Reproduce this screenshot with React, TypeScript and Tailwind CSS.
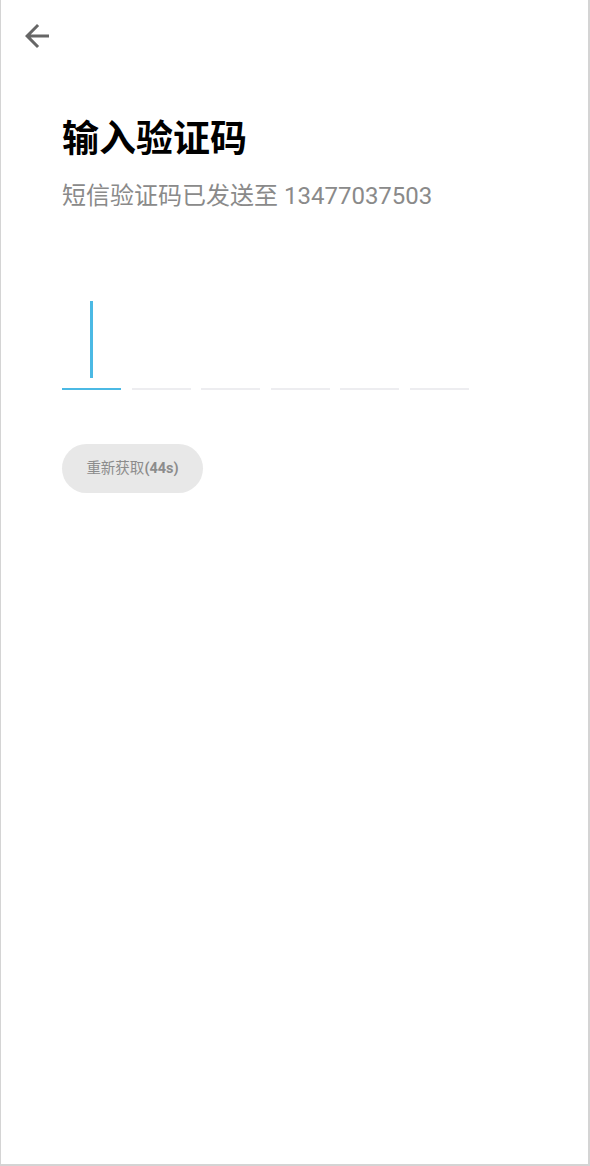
import React from 'react';

const ArrowBack: React.FC = () => (
  <svg width={36} height={36} viewBox="0 0 24 24" fill="#666666">
    <path d="M20 11H7.83l5.59-5.59L12 4l-8 8 8 8 1.41-1.41L7.83 13H20v-2z" />
  </svg>
);

const CodeInput: React.FC<{ length: number; active: number }> = ({ length, active }) => {
  return (
    <div className="flex gap-[10.5px]">
      {Array.from({ length }).map((_, i) => (
        <div key={i} className="w-[59px] h-[90px] flex flex-col">
          <div className="flex-1 relative">
            {i === active && (
              <div className="absolute left-[28px] top-[1px] w-[3px] h-[77px] bg-[#4bb9e4]" />
            )}
          </div>
          <div className={i === active ? 'h-[2px] bg-[#4bb9e4]' : 'h-[2px] bg-[#ededf0]'} />
        </div>
      ))}
    </div>
  );
};

export default function App() {
  return (
    <div
      className="h-[1166px] bg-white border-l border-r-2 border-b-2 border-[#d4d4d4] flex flex-col"
      style={{ fontFamily: 'Roboto, "Noto Sans CJK SC", sans-serif' }}
    >
      <div className="h-[72px] flex items-start pt-[18px] pl-[18px]">
        <ArrowBack />
      </div>

      <div className="px-[61px] flex flex-col">
        <h1 className="mt-[44px] text-[37px] leading-[48px] font-bold text-black">输入验证码</h1>
        <p className="mt-[16px] text-[24px] leading-[32px] text-[#8a8a8a]">短信验证码已发送至 13477037503</p>

        <div className="mt-[88px]">
          <CodeInput length={6} active={0} />
        </div>

        <div className="mt-[54px]">
          <button className="w-[141px] h-[49px] rounded-full bg-[#e8e8e8] text-[14.5px] text-[#8c8c8c] flex items-center justify-center">
            重新获取<span className="font-bold">(44s)</span>
          </button>
        </div>
      </div>
    </div>
  );
}
